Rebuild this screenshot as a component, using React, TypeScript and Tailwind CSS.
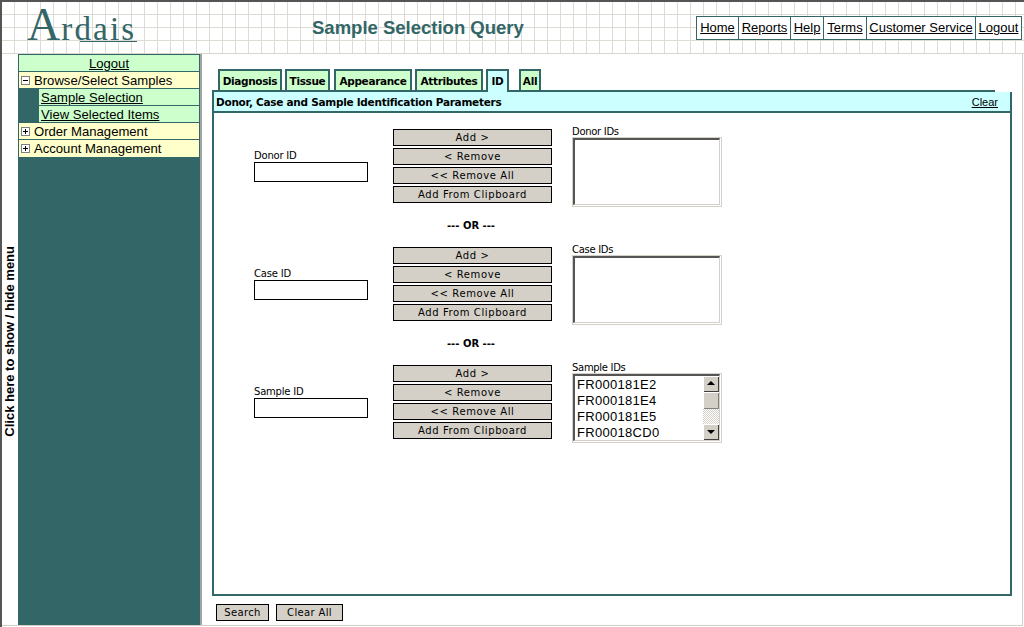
const sans = "font-['Liberation_Sans',Arial,sans-serif]";

const topLinks = [
  { label: "Home", width: "w-[41px]" },
  { label: "Reports", width: "w-[52px]" },
  { label: "Help", width: "w-[33px]" },
  { label: "Terms", width: "w-[43px]" },
  { label: "Customer Service", width: "w-[109px]" },
  { label: "Logout", width: "w-[46px]" },
];
const tabs = [
  { label: "Diagnosis", box: "w-[64px] mr-[3px]" },
  { label: "Tissue", box: "w-[45px] mr-[4px]" },
  { label: "Appearance", box: "w-[78px] mr-[3px]" },
  { label: "Attributes", box: "w-[68px] mr-[3px]" },
  { label: "ID", box: "w-[23px] mr-[10px]" },
  { label: "All", box: "w-[22px]" },
];
const samples = ["FR000181E2", "FR000181E4", "FR000181E5", "FR00018CD0"];

function Header() {
  return (
    <header className="flex h-[52px] shrink-0 items-start border-b border-[#d8d6cf] bg-[linear-gradient(to_right,#dddbd4_1px,transparent_1px),linear-gradient(to_bottom,#dddbd4_1px,transparent_1px)] bg-[size:13px_13px] bg-[position:12px_12px]">
      <div className="relative ml-[25px] h-[46px] w-[112px] whitespace-nowrap font-['Liberation_Serif',serif] leading-[46px] text-[#336666]">
        <span className="text-[46px] tracking-[1px]">A</span>
        <span className="text-[33px] tracking-[2.2px]">rdais</span>
        <div className="absolute bottom-[6px] left-[53px] h-[1px] w-[57px] bg-[#336666]" />
      </div>
      <h1 className={`ml-[173px] mt-[15px] whitespace-nowrap text-[18.5px] leading-[22px] font-bold text-[#336666] ${sans}`}>
        Sample Selection Query
      </h1>
      <nav className={`ml-auto mr-[2px] mt-[14px] flex h-[24px] border border-[#336666] bg-white text-[13px] text-black ${sans}`}>
        {topLinks.map((l, i) => (
          <a key={l.label} className={`flex items-center justify-center underline ${l.width} ${i > 0 ? "border-l border-[#336666]" : ""}`}>
            {l.label}
          </a>
        ))}
      </nav>
    </header>
  );
}

function PlusMinus({ open }: { open?: boolean }) {
  return (
    <svg width="9" height="9" viewBox="0 0 9 9" className="mr-[4px] ml-[2px] -mt-[1px] shrink-0">
      <rect x="0.5" y="0.5" width="8" height="8" fill="#fff" stroke="#808080" />
      <path d="M2 4.5H7" stroke="#000" />
      {!open && <path d="M4.5 2V7" stroke="#000" />}
    </svg>
  );
}

function Sidebar() {
  return (
    <aside className={`flex shrink-0 text-[13.1px] leading-[16px] text-black ${sans}`}>
      <button className="flex w-[16px] items-center justify-center bg-white pt-[4px]">
        <span className="whitespace-nowrap [writing-mode:vertical-rl] rotate-180 text-[13px] font-bold">
          Click here to show / hide menu
        </span>
      </button>
      <div className="w-[182px] bg-[#336666] px-[1px] pt-[1px]">
        <a className="block h-[17px] border-b border-[#336666] bg-[#ccffcc] pt-[1px] text-center underline">Logout</a>
        <div className="flex h-[17px] items-center border-b border-[#336666] bg-[#ffffcc] pt-[1px]">
          <PlusMinus open />
          Browse/Select Samples
        </div>
        <a className="ml-[20px] block h-[17px] border-b border-[#336666] bg-[#ccffcc] pl-[2px] pt-[1px] underline">Sample Selection</a>
        <a className="ml-[20px] block h-[17px] border-b border-[#336666] bg-[#ccffcc] pl-[2px] pt-[1px] underline">View Selected Items</a>
        <div className="flex h-[17px] items-center border-b border-[#336666] bg-[#ffffcc] pt-[1px]">
          <PlusMinus />
          Order Management
        </div>
        <div className="flex h-[17px] items-center bg-[#ffffcc] pt-[1px]">
          <PlusMinus />
          Account Management
        </div>
      </div>
      <div className="w-[2px] bg-[#a5a2a5]" />
    </aside>
  );
}

function Tabs() {
  return (
    <div className="ml-[6px] flex h-[21px] font-['DejaVu_Sans',Verdana,sans-serif] text-[10.5px] font-bold tracking-[-0.35px]">
      {tabs.map((t) => {
        const active = t.label === "ID";
        return (
          <div
            key={t.label}
            className={`flex items-center justify-center border-x-2 border-t-2 border-[#336666] pt-[2px] ${t.box} ${
              active ? "relative z-10 h-[23px] bg-[#ccffff] pb-[2px]" : "h-[21px] bg-[#ccffcc]"
            }`}
          >
            {t.label}
          </div>
        );
      })}
    </div>
  );
}

function ActionButton({ label }: { label: string }) {
  return (
    <button className="h-[17px] w-[159px] border border-black bg-[#d4d0c8] text-center font-['DejaVu_Sans',Verdana,sans-serif] text-[10px] leading-[15px] tracking-[0.6px] text-black">
      {label}
    </button>
  );
}

function ScrollArrow({ d }: { d: string }) {
  return (
    <div className="h-[16px] w-[16px] bg-[#d4d0c8] shadow-[inset_1px_1px_0_#fff,inset_-1px_-1px_0_#404040]">
      <svg width="16" height="16" viewBox="0 0 16 16">
        <path d={d} fill="#000" />
      </svg>
    </div>
  );
}

function ListBox({ items }: { items?: string[] }) {
  return (
    <div className="h-[70px] w-[150px] border border-[#d4d0c8] bg-white pb-[1px] pr-[1px]">
      <div className={`flex h-[67px] border-t-2 border-r border-b border-l-2 border-t-[#555555] border-r-[#d4d0c8] border-b-[#d4d0c8] border-l-[#555555] bg-white text-[13px] leading-[16px] ${sans}`}>
        <div className="flex-1 pl-[2px] pt-[1px]">
          {items?.map((s) => (
            <div key={s} className="tracking-[0.3px]">{s}</div>
          ))}
        </div>
        {items && (
          <div className="flex w-[16px] flex-col bg-[repeating-conic-gradient(#d4d0c8_0%_25%,#fff_0%_50%)] bg-[size:2px_2px]">
            <ScrollArrow d="M4 9L8 5L12 9Z" />
            <div className="h-[17px] bg-[#d4d0c8] shadow-[inset_1px_1px_0_#fff,inset_-1px_-1px_0_#808080]" />
            <div className="flex-1" />
            <ScrollArrow d="M4 6L8 10L12 6Z" />
          </div>
        )}
      </div>
    </div>
  );
}

function IdGroup({ label, listLabel, items }: { label: string; listLabel: string; items?: string[] }) {
  return (
    <div className="flex h-[80px] items-start pl-[40px] font-['DejaVu_Sans',Verdana,sans-serif] text-[10px] leading-[12px] text-black">
      <div className="w-[139px] pt-[21px]">
        <label className="block tracking-[-0.2px]">{label}</label>
        <input className="block h-[20px] w-[114px] border border-black bg-white" />
      </div>
      <div className="flex w-[179px] flex-col gap-[2px]">
        <ActionButton label="Add >" />
        <ActionButton label="< Remove" />
        <ActionButton label="<< Remove All" />
        <ActionButton label="Add From Clipboard" />
      </div>
      <div className="-mt-[4px]">
        <div className="h-[12px] leading-[14px] tracking-[-0.3px]">{listLabel}</div>
        <ListBox items={items} />
      </div>
    </div>
  );
}

function OrRow() {
  return (
    <div className="flex h-[38px] w-[514px] items-center justify-center pb-[6px] font-['DejaVu_Sans',Verdana,sans-serif] text-[10px] font-bold">
      --- OR ---
    </div>
  );
}

function Panel() {
  return (
    <div className="mr-[10px]">
      <div className="h-[2px] w-[783px] bg-[#336666]" />
      <section className="flex h-[504px] flex-col border-x-2 border-b-2 border-[#336666]">
        <div className="flex h-[21px] shrink-0 items-center justify-between border-b-2 border-[#336666] bg-[#ccffff] pl-[2px] pr-[12px] pt-[2px]">
          <span className="font-['DejaVu_Sans',Verdana,sans-serif] text-[10.5px] font-bold tracking-[-0.27px]">
            Donor, Case and Sample Identification Parameters
          </span>
          <a className={`text-[11px] underline ${sans}`}>Clear</a>
        </div>
        <div className="pt-[16px]">
          <IdGroup label="Donor ID" listLabel="Donor IDs" />
          <OrRow />
          <IdGroup label="Case ID" listLabel="Case IDs" />
          <OrRow />
          <IdGroup label="Sample ID" listLabel="Sample IDs" items={samples} />
        </div>
      </section>
    </div>
  );
}

export default function App() {
  return (
    <div className="flex h-[627px] w-[1024px] flex-col overflow-hidden border-t-2 border-l-2 border-[#555555] bg-white">
      <Header />
      <div className="mb-[1px] mr-[1px] flex min-h-0 flex-1 border-r border-b border-[#d4d0c8]">
        <Sidebar />
        <main className="flex-1 pl-[10px] pt-[15px]">
          <Tabs />
          <Panel />
          <div className="mt-[8px] ml-[4px] flex gap-[7px] font-['DejaVu_Sans',Verdana,sans-serif] text-[10px] tracking-[0.35px]">
            <button className="h-[17px] w-[53px] border border-black bg-[#d4d0c8]">Search</button>
            <button className="h-[17px] w-[67px] border border-black bg-[#d4d0c8]">Clear All</button>
          </div>
        </main>
      </div>
    </div>
  );
}
